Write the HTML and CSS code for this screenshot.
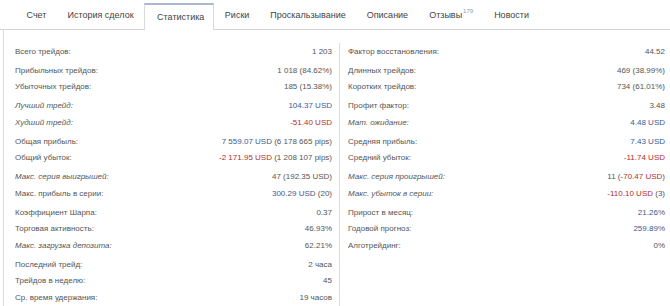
FILE: index.html
```html
<!DOCTYPE html>
<html lang="ru">
<head>
  <meta charset="UTF-8"/>
  <title>Статистика</title>
  <link rel="stylesheet" href="styles.css">
</head>
<body>
  <div class="tabs">
    <a class="tab">Счет</a>
    <a class="tab">История сделок</a>
    <a class="tab active">Статистика</a>
    <a class="tab">Риски</a>
    <a class="tab">Проскальзывание</a>
    <a class="tab">Описание</a>
    <a class="tab">Отзывы<sup class="count">179</sup></a>
    <a class="tab">Новости</a>
  </div>

  <div class="stats">
    <div class="col left">
      <div class="group">
        <div class="row"><span>Всего трейдов:</span><span>1 203</span></div>
      </div>
      <div class="group">
        <div class="row"><span>Прибыльных трейдов:</span><span>1 018 (84.62%)</span></div>
        <div class="row"><span>Убыточных трейдов:</span><span>185 (15.38%)</span></div>
      </div>
      <div class="group">
        <div class="row"><span class="hint">Лучший трейд:</span><span class="pos">104.37 USD</span></div>
        <div class="row"><span class="hint">Худший трейд:</span><span class="neg">-51.40 USD</span></div>
      </div>
      <div class="group">
        <div class="row"><span>Общая прибыль:</span><span><b class="pos">7 559.07 USD</b> (6 178 665 pips)</span></div>
        <div class="row"><span>Общий убыток:</span><span><b class="neg">-2 171.95 USD</b> (1 208 107 pips)</span></div>
      </div>
      <div class="group">
        <div class="row"><span class="hint">Макс. серия выигрышей:</span><span>47 (192.35 USD)</span></div>
        <div class="row"><span>Макс. прибыль в серии:</span><span><b class="pos">300.29 USD</b> (20)</span></div>
      </div>
      <div class="group">
        <div class="row"><span>Коэффициент Шарпа:</span><span>0.37</span></div>
        <div class="row"><span>Торговая активность:</span><span>46.93%</span></div>
        <div class="row"><span class="hint">Макс. загрузка депозита:</span><span>62.21%</span></div>
      </div>
      <div class="group">
        <div class="row"><span>Последний трейд:</span><span>2 часа</span></div>
        <div class="row"><span>Трейдов в неделю:</span><span>45</span></div>
        <div class="row"><span>Ср. время удержания:</span><span>19 часов</span></div>
      </div>
    </div>

    <div class="col right">
      <div class="group">
        <div class="row"><span>Фактор восстановления:</span><span>44.52</span></div>
      </div>
      <div class="group">
        <div class="row"><span>Длинных трейдов:</span><span>469 (38.99%)</span></div>
        <div class="row"><span>Коротких трейдов:</span><span>734 (61.01%)</span></div>
      </div>
      <div class="group">
        <div class="row"><span>Профит фактор:</span><span>3.48</span></div>
        <div class="row"><span class="hint">Мат. ожидание:</span><span class="pos">4.48 USD</span></div>
      </div>
      <div class="group">
        <div class="row"><span>Средняя прибыль:</span><span class="pos">7.43 USD</span></div>
        <div class="row"><span>Средний убыток:</span><span class="neg">-11.74 USD</span></div>
      </div>
      <div class="group">
        <div class="row"><span class="hint">Макс. серия проигрышей:</span><span>11 (<b class="neg">-70.47 USD</b>)</span></div>
        <div class="row"><span class="hint">Макс. убыток в серии:</span><span><b class="neg">-110.10 USD</b> (3)</span></div>
      </div>
      <div class="group">
        <div class="row"><span>Прирост в месяц:</span><span class="pos">21.26%</span></div>
        <div class="row"><span>Годовой прогноз:</span><span class="pos">259.89%</span></div>
        <div class="row"><span>Алготрейдинг:</span><span>0%</span></div>
      </div>
    </div>
  </div>
</body>
</html>
```

FILE: styles.css
```css
body {
  margin: 0;
  background: #fff;
  font-family: "Liberation Sans", Arial, sans-serif;
  color: #555;
}
.tabs {
  display: flex;
  align-items: flex-start;
  height: 29px;
  padding-left: 16px;
  border-bottom: 1px solid #d4d4d4;
}
.tab {
  padding: 1px 10.5px 0;
  line-height: 29px;
  font-size: 9px;
  color: #444;
  cursor: pointer;
}
.tab.active {
  padding: 0 9px 0 12px;
  margin: 3px 0 -1px 0;
  line-height: 25px;
  height: 25px;
  border: 1px solid #d9d9d9;
  border-top: 2px solid #a9b9cb;
  border-bottom: none;
  background: #fff;
}
.count {
  font-size: 6px;
  line-height: 0;
  color: #7a9cc4;
  vertical-align: 5px;
  margin-left: 1px;
}
.stats {
  display: flex;
  margin-left: 3px;
  border-left: 1px solid #dcdcdc;
  padding-top: 13px;
  height: 263px;
}
.col {
  flex: 1;
}
.left {
  padding: 0 7px 0 11px;
}
.right {
  border-left: 1px solid #dcdcdc;
  padding: 0 5px 0 8px;
}
.group + .group {
  margin-top: 2.5px;
}
.row {
  display: flex;
  justify-content: space-between;
  align-items: center;
  height: 16.5px;
  font-size: 8px;
}
.row b {
  font-weight: normal;
}
.hint {
  font-style: italic;
}
.pos {
  color: #3c5a92;
}
.neg {
  color: #b22d2d;
}
```
